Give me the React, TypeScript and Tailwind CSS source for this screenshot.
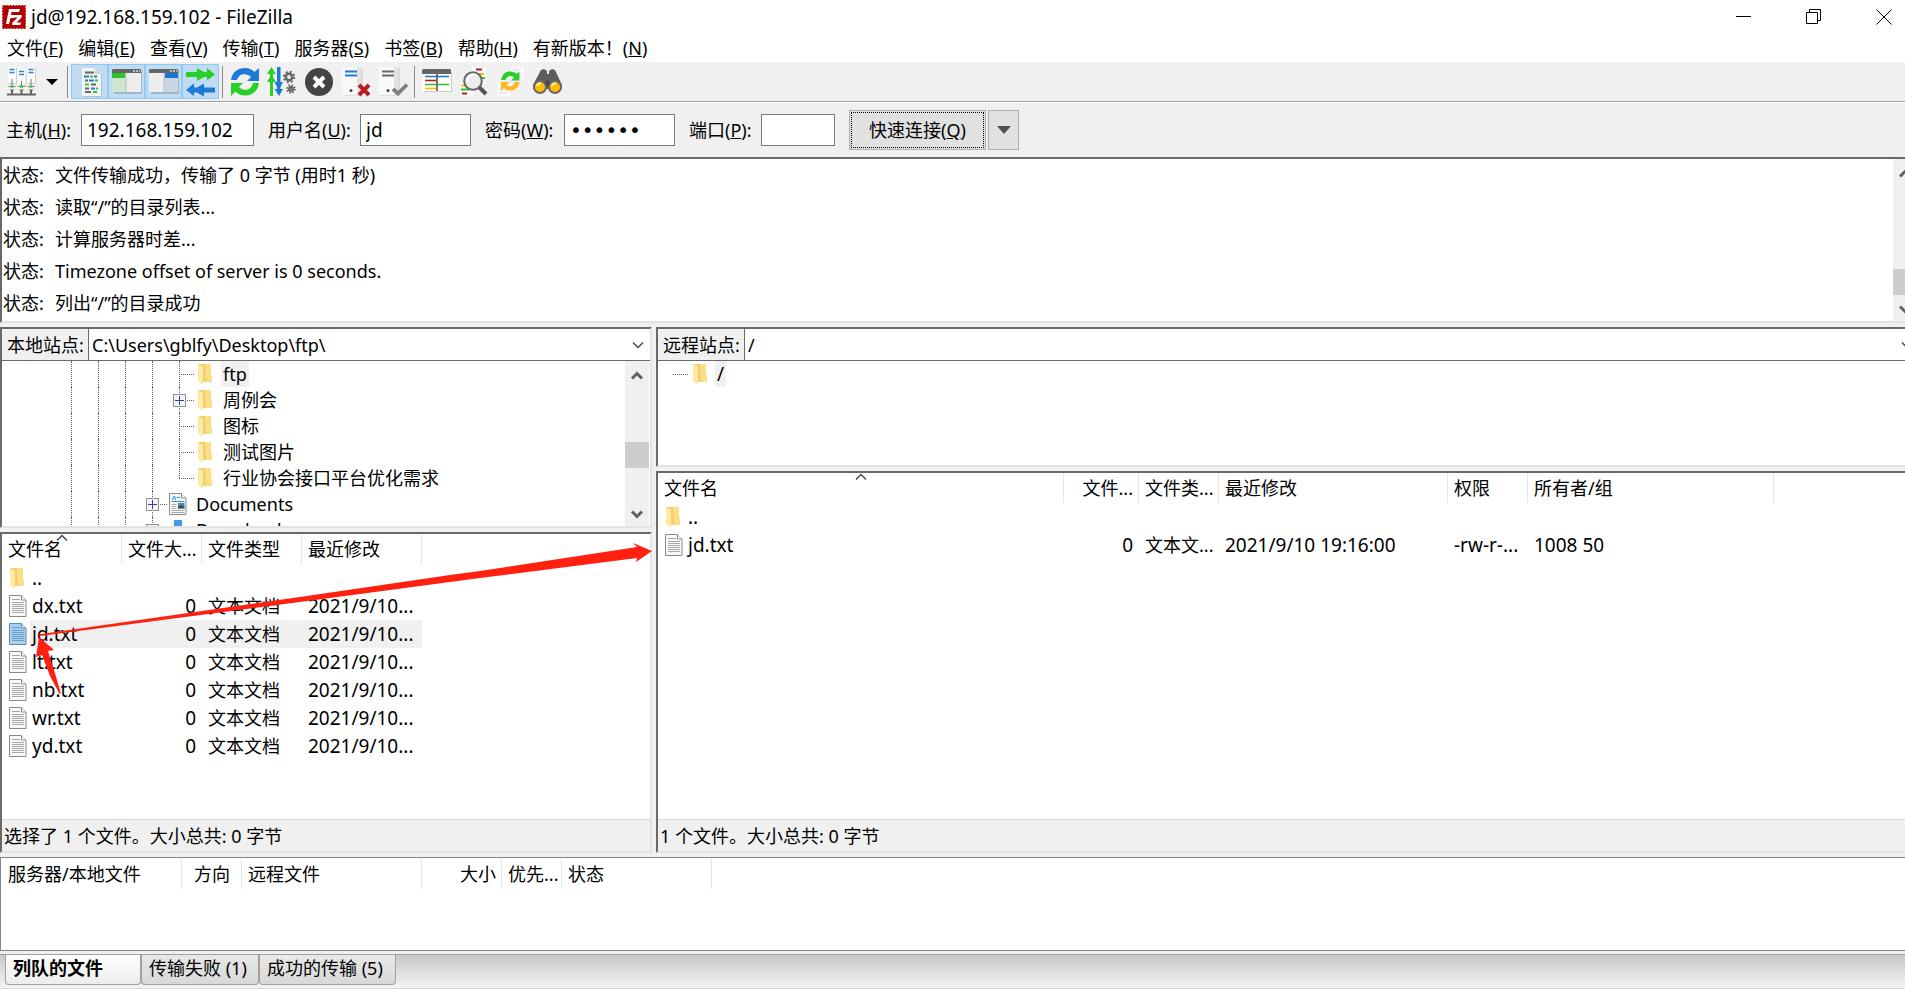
import type { ReactNode } from 'react'

interface Column {
  label: string
  width: string
  align?: 'left' | 'right' | 'center'
  sorted?: boolean
}

interface FileRow {
  name: string
  size?: string
  type?: string
  modified?: string
  perms?: string
  owner?: string
  folder?: boolean
  selected?: boolean
}

const menus = [
  ['文件', 'F'],
  ['编辑', 'E'],
  ['查看', 'V'],
  ['传输', 'T'],
  ['服务器', 'S'],
  ['书签', 'B'],
  ['帮助', 'H'],
  ['有新版本！', 'N'],
]

const logLines = [
  '文件传输成功，传输了 0 字节 (用时1 秒)',
  '读取“/”的目录列表...',
  '计算服务器时差...',
  'Timezone offset of server is 0 seconds.',
  '列出“/”的目录成功',
]

const localColumns: Column[] = [
  { label: '文件名', width: 'w-[120px]', sorted: true },
  { label: '文件大...', width: 'w-[80px]', align: 'right' },
  { label: '文件类型', width: 'w-[100px]' },
  { label: '最近修改', width: 'w-[120px]' },
]

const localFiles: FileRow[] = [
  { name: '..', folder: true },
  ...['dx.txt', 'jd.txt', 'lt.txt', 'nb.txt', 'wr.txt', 'yd.txt'].map((name) => ({
    name,
    size: '0',
    type: '文本文档',
    modified: '2021/9/10...',
    selected: name === 'jd.txt',
  })),
]

const remoteColumns: Column[] = [
  { label: '文件名', width: 'w-[406px]', sorted: true },
  { label: '文件...', width: 'w-[75px]', align: 'right' },
  { label: '文件类...', width: 'w-[80px]' },
  { label: '最近修改', width: 'w-[229px]' },
  { label: '权限', width: 'w-[80px]' },
  { label: '所有者/组', width: 'w-[246px]' },
]

const remoteFiles: FileRow[] = [
  { name: '..', folder: true },
  { name: 'jd.txt', size: '0', type: '文本文...', modified: '2021/9/10 19:16:00', perms: '-rw-r-...', owner: '1008 50' },
]

const queueColumns: Column[] = [
  { label: '服务器/本地文件', width: 'w-[180px]' },
  { label: '方向', width: 'w-[60px]', align: 'center' },
  { label: '远程文件', width: 'w-[180px]' },
  { label: '大小', width: 'w-[80px]', align: 'right' },
  { label: '优先...', width: 'w-[60px]' },
  { label: '状态', width: 'w-[150px]' },
]

const sunken = 'border-t-2 border-l-2 border-t-[#696969] border-l-[#696969] border-b-2 border-b-[#e3e3e3]'

/* ---------- icons ---------- */

function FolderIcon() {
  return (
    <svg width="16" height="22" viewBox="0 0 16 22" className="shrink-0">
      <path d="M1 1h13v11l1 1v6H5z" fill="#f3cf6b" />
      <path d="M8 1h6v11l1 1v6H9z" fill="#fbdf87" />
      <path d="M1 1l5 3v17l-1 .5L1 18z" fill="#ffe9a6" />
    </svg>
  )
}

function FileIcon({ selected }: { selected?: boolean }) {
  const edge = selected ? '#5b8cb5' : '#8a8a8a'
  return (
    <svg width="18" height="22" viewBox="0 0 18 22" className="shrink-0">
      <path d="M.5.5h12l4.500 4.500v16.500H.5z" fill={selected ? '#a9cff0' : '#f8f8f8'} stroke={edge} />
      <path d="M12.500.5v4.500H17" fill={selected ? '#cfe5f8' : '#fff'} stroke={edge} />
      <path d="M3 4.500h8M3 7.500h12M3 9.500h12M3 11.500h12M3 13.500h12M3 15.500h12M3 17.500h12" stroke={selected ? '#6c9bc4' : '#a8a8a8'} />
    </svg>
  )
}

function DocumentsIcon() {
  return (
    <svg width="18" height="22" viewBox="0 0 18 22" className="shrink-0">
      <path d="M.5.5h12l4.500 4.500v16.500H.5z" fill="#f8f8f8" stroke="#8a8a8a" />
      <path d="M12.500.5v4.500H17" fill="#fff" stroke="#8a8a8a" />
      <path d="M3 7l2.500-4L6.500 7M8 4.500h3M2.500 8.500h13" stroke="#2b8fd0" fill="none" />
      <path d="M2.500 11.500h5M2.500 13.500h5M2.500 15.500h5M2.500 17.500h13M2.500 19.500h13" stroke="#a8a8a8" />
      <path d="M9 10h6.500v5.500H9z" fill="#4d87ad" />
      <path d="M9 13l3-1 3.500 2v1.500H9z" fill="#2c5a52" />
    </svg>
  )
}

function DownloadsIcon() {
  return (
    <svg width="18" height="22" viewBox="0 0 18 22" className="shrink-0">
      <path d="M5 1h8v11h4l-8 9-8-9h4z" fill="#3f9ae5" />
    </svg>
  )
}

function Chevron({ up, thin }: { up?: boolean; thin?: boolean }) {
  return (
    <svg width="14" height="10" viewBox="0 0 14 10" className="shrink-0" fill="none" stroke={thin ? '#444' : '#606060'} strokeWidth={thin ? 1.3 : 3}>
      <path d={up ? 'M2 7.500L7 2.500l5 5' : 'M2 2.500l5 5 5-5'} />
    </svg>
  )
}

function SiteManagerIcon() {
  return (
    <svg width="30" height="30" viewBox="0 0 30 30">
      {[[1, 0], [10.500, 2], [20, 0]].map(([x, y]) => (
        <g key={x}>
          <path d={`M${x + 1} ${y + 1}h8v16h-8z`} fill="#cfcfcf" />
          <path d={`M${x} ${y}h8v16h-8z`} fill="#fafafa" />
          <path d={`M${x + 1.500} ${y + 2.500}h5M${x + 1.500} ${y + 5.500}h5`} stroke="#2f82cf" strokeWidth="1.500" />
          <path d={`M${x + 4} ${y + 12}v6`} stroke="#777" />
          <path d={`M${x} 19.500h8`} stroke="#999" />
          <path d={`M${x + 2.500} 19.500h3`} stroke="#2fcf2f" strokeWidth="2.500" />
        </g>
      ))}
      <path d="M0 27.500h29M5 27v-4M14.500 27v-4M24 27v-4" stroke="#666" strokeWidth="2" fill="none" />
      <path d="M3 23h4M12.500 23h4M22 23h4" stroke="#666" />
    </svg>
  )
}

function LogIcon() {
  return (
    <svg width="30" height="30" viewBox="0 0 30 30">
      <g transform="translate(2 1)">
        <path d="M6 1h13l6 6v22H6z" fill="#a9c3d8" />
        <path d="M5 0h13l6 6v22H5z" fill="#f3f3f3" />
        <path d="M18 0l6 6h-6z" fill="#d2d2d2" />
        <g strokeWidth="2">
          <path d="M8 4.500h9M8 12.500h3M14 16.500h5M8 20.500h4M8 24h6" stroke="#666" />
          <path d="M7 8.500h5M17 8.500h3M12 12.500h5M14 20.500h4" stroke="#2b78c8" />
          <path d="M13 8.500h3M18 12.500h3M8 16.500h4M19 20.500h2M16 24h4" stroke="#2ecc2e" />
        </g>
      </g>
    </svg>
  )
}

function TreeToggleIcon({ right }: { right?: boolean }) {
  return (
    <svg width="30" height="30" viewBox="0 0 30 30">
      <path d="M2 4h28v23H2z" fill="#9db8cd" />
      <path d="M0 5h29v20H0z" fill={right ? '#c9d6e3' : '#cfe5cf'} />
      {right ? <path d="M0 5h15v20H0z" fill="#eee" /> : <path d="M14 5h15v20H14z" fill="#eee" />}
      <path d="M1 2h27l1 1v3H0V3z" fill="#666" />
      <path d="M21 4h2M24 4h2M27 4h1" stroke="#ddd" strokeWidth="1.300" />
      {right ? <path d="M16 6h13v5H16z" fill="#1976d2" /> : <path d="M0 6h13v5H0z" fill="#28c428" />}
      {right ? <path d="M15 6v19" stroke="#b4c2d0" /> : <path d="M14 6v19" stroke="#b0c4b0" />}
    </svg>
  )
}

function QueueToggleIcon() {
  return (
    <svg width="30" height="30" viewBox="0 0 30 30">
      <path d="M0 5h11V1l7 4h3V1l8 6.500-8 6V10h-3l-7 4v-4H0z" fill="#27cf27" />
      <path d="M29 20.500H18v-4l-7 4H8v-4L0 23l8 6v-3.500h3l7 4v-4h11z" fill="#1b7bd6" />
    </svg>
  )
}

function RefreshIcon() {
  return (
    <svg width="30" height="30" viewBox="0 0 30 30">
      <path d="M1 13C2 5 8 1 15 1c4 0 7 1.500 9.500 4L29 1v13H17l4-4c-4-4-12-4-14 3z" fill="#1b7bd6" />
      <path d="M29 16c-1 8-7 12.500-14 12.500-4 0-7-1.500-9.500-4L1 29V16h12l-4 4c4 4.500 12 4 14-4z" fill="#27cf27" />
    </svg>
  )
}

function Gear({ cx, cy, r }: { cx: number; cy: number; r: number }) {
  return (
    <g stroke="#666" fill="none">
      <circle cx={cx} cy={cy} r={r} strokeWidth="2.500" />
      <circle cx={cx} cy={cy} r={r + 2} strokeWidth="2" strokeDasharray={`${(r + 2) * 0.393} ${(r + 2) * 0.393}`} />
    </g>
  )
}

function ProcessQueueIcon() {
  return (
    <svg width="30" height="30" viewBox="0 0 30 30">
      <path d="M3 29V15H0l3-5V7H0l4.500-7L9 7H6v3l3 5H6v14z" fill="#27cf27" />
      <path d="M10 0h3.500v15H16l-2.500 5v2H16l-4 7-4.500-7H10v-2l-2.500-5H10z" fill="#1b7bd6" />
      <Gear cx={22} cy={10} r={3.2} />
      <Gear cx={24} cy={22} r={1.8} />
    </svg>
  )
}

function CancelIcon() {
  return (
    <svg width="30" height="30" viewBox="0 0 30 30">
      <circle cx="15" cy="15" r="14" fill="#444" />
      <path d="M10 10l10 10M20 10L10 20" stroke="#fff" strokeWidth="4" />
    </svg>
  )
}

function ServerIcon({ ok }: { ok?: boolean }) {
  return (
    <svg width="30" height="30" viewBox="0 0 30 30">
      <path d="M2 1h20v28H2z" fill="#dcdcdc" />
      <path d="M1 0h15l3 2v26H1z" fill="#f9f9f9" />
      <path d="M16 0l4 2v26h-4z" fill="#e2e2e2" />
      <path d="M4 4.500h12M4 8.500h12" stroke={ok ? '#666' : '#1b7bd6'} strokeWidth="1.800" />
      <circle cx="10" cy="23.500" r="1.500" fill="#444" />
      {ok ? (
        <path d="M15 22l5 4.500 9-9" stroke="#808080" strokeWidth="3.800" fill="none" />
      ) : (
        <path d="M18 18l10 10M28 18L18 28" stroke="#b51f24" strokeWidth="4" />
      )}
    </svg>
  )
}

function FilterIcon() {
  return (
    <svg width="30" height="30" viewBox="0 0 30 30">
      <path d="M2 5h28v20H2z" fill="#ccc" />
      <path d="M0 5h29v19H0z" fill="#fff" />
      <path d="M1 2h27l1 1v4H0V3z" fill="#666" />
      <g strokeWidth="1.600">
        <path d="M3 9.500h24" stroke="#1b7bd6" />
        <path d="M3 13.500h11" stroke="#b51f24" />
        <path d="M3 17.500h11M16 17.500h11" stroke="#27c427" />
        <path d="M3 21.500h11" stroke="#ffb900" />
        <path d="M15 7v17" stroke="#555" />
      </g>
    </svg>
  )
}

function CompareIcon() {
  return (
    <svg width="30" height="30" viewBox="0 0 30 30">
      <path d="M13 0h14v16H13zM1 16h14v13H1z" fill="#fafafa" />
      <g strokeWidth="2">
        <path d="M17 2.500h6M3 26.500h5" stroke="#b51f24" />
        <path d="M19 7h6M2 18.500h5" stroke="#ffb900" />
        <path d="M21 11h5M2 22.500h8" stroke="#27c427" />
      </g>
      <path d="M20 20l7 7" stroke="#555" strokeWidth="4" />
      <circle cx="14" cy="14" r="8.800" fill="#ececec" stroke="#666" strokeWidth="2" />
      <path d="M8.500 15a6 6 0 0 1 9-6.500" stroke="#fff" strokeWidth="2" fill="none" />
    </svg>
  )
}

function SyncIcon() {
  return (
    <svg width="30" height="30" viewBox="0 0 30 30">
      <path d="M15 0h13v13H15zM1 16h13v13H1z" fill="#fafafa" />
      <path d="M17 3h8M17 6h8M3 23h8M3 26h8" stroke="#d8d8d8" />
      <path d="M5 13C6 7 10 4.500 14 4.500c3 0 5 1 6.500 2.500L23.500 5v8.500H15l3-3c-3-2.500-7-2-8.500 2.500z" fill="#27cf27" />
      <path d="M23.500 15c-1 6-5 8.500-9 8.500-3 0-5-1-6.500-2.500L5 23.500V15h8.500l-3 3c3 2.500 7 2 8.500-3z" fill="#ffb51b" />
    </svg>
  )
}

function FindIcon() {
  return (
    <svg width="30" height="30" viewBox="0 0 30 30">
      <path d="M8 3l3-1 3 2v3h2V4l3-2 3 1 7 15v4H0v-4z" fill="#5d5d5d" />
      <path d="M12.500 14h4v6h-4z" fill="#444" />
      <circle cx="7" cy="20" r="6" fill="#ffb900" stroke="#666" strokeWidth="1.800" />
      <circle cx="22" cy="20" r="6" fill="#ffb900" stroke="#666" strokeWidth="1.800" />
      <path d="M4 19a3.500 3.500 0 0 1 4-2.500M19 19a3.500 3.500 0 0 1 4-2.500" stroke="#fff0b0" strokeWidth="2" fill="none" />
    </svg>
  )
}

/* ---------- small parts ---------- */

function ToolButton({ label, active, children }: { label: string; active?: boolean; children: ReactNode }) {
  return (
    <button
      aria-label={label}
      className={`flex h-[35px] w-[37px] shrink-0 items-center justify-center ${active ? 'border border-[#90c8f6] bg-[#c0dcf3]' : ''}`}
    >
      {children}
    </button>
  )
}

function Separator() {
  return <span className="mx-[3px] h-8 w-px bg-[#8a8a8a]" />
}

function ScrollBar({ className, space }: { className?: string; space: string }) {
  return (
    <div className={`flex w-6 shrink-0 flex-col items-center bg-[#f0f0f0] ${className ?? ''}`}>
      <span className="flex h-[29px] items-center"><Chevron up /></span>
      <span className={space} />
      <span className="h-[26px] w-full bg-[#cdcdcd]" />
      <span className="flex-1" />
      <span className="flex h-6 items-center"><Chevron /></span>
    </div>
  )
}

function QuickField({ id, label, hotkey, labelWidth, inputWidth, value, type = 'text' }: {
  id: string
  label: string
  hotkey: string
  labelWidth: string
  inputWidth: string
  value: string
  type?: string
}) {
  return (
    <div className="flex items-center">
      <label htmlFor={id} className={`${labelWidth} whitespace-nowrap`}>
        {label}(<u>{hotkey}</u>):
      </label>
      <input
        id={id}
        type={type}
        defaultValue={value}
        className={`${inputWidth} h-8 border border-[#7a7a7a] bg-white px-[5px] outline-none ${type === 'password' ? "font-['DejaVu_Sans',sans-serif] text-[20px]" : 'text-[19px]'}`}
      />
    </div>
  )
}

function AddressBar({ id, label, path, className }: { id: string; label: string; path: string; className?: string }) {
  return (
    <div className={`flex h-8 shrink-0 border-b border-[#696969] ${className ?? ''}`}>
      <label htmlFor={id} className="flex w-[87px] shrink-0 items-center border-r border-[#696969] bg-[#f0f0f0] pl-[5px] whitespace-nowrap">
        {label}
      </label>
      <div className="relative flex-1">
        <select id={id} className="h-full w-full appearance-none bg-white pl-[3px] outline-none">
          <option>{path}</option>
        </select>
        <span className="pointer-events-none absolute top-0 right-[5px] flex h-full items-center"><Chevron thin /></span>
      </div>
    </div>
  )
}

function TreeRow({ depth, label, icon, expandable, last, selected }: {
  depth: number
  label: string
  icon: ReactNode
  expandable?: boolean
  last?: boolean
  selected?: boolean
}) {
  return (
    <li className="flex h-[26px] items-stretch pl-14">
      {Array.from({ length: depth }, (_, i) => (
        <span key={i} className="w-[27px] shrink-0 pl-[13px]">
          <span className="block h-full border-l border-dotted border-[#606060]" />
        </span>
      ))}
      <span className="relative w-[27px] shrink-0 pl-[13px]">
        <span className={`block border-l border-dotted border-[#606060] ${last ? 'h-[13px]' : 'h-full'}`} />
        <span className="absolute top-[13px] left-[13px] w-[15px] border-t border-dotted border-[#606060]" />
        {expandable && (
          <button aria-label={`展开 ${label}`} className="absolute top-[7px] left-[7px] flex h-[13px] w-[13px] items-center justify-center border border-[#919191] bg-[#f4f4f4]">
            <svg width="9" height="9" viewBox="0 0 9 9"><path d="M0 4.500h9M4.500 0v9" stroke="#33468c" /></svg>
          </button>
        )}
      </span>
      <span className="flex w-7 shrink-0 items-center justify-center pr-1">{icon}</span>
      <span className={`flex items-center px-0.5 whitespace-nowrap ${selected ? 'bg-[#f0f0f0]' : ''}`}>{label}</span>
    </li>
  )
}

function HeaderRow({ columns }: { columns: Column[] }) {
  return (
    <thead>
      <tr className="h-[30px]">
        {columns.map((col) => (
          <th
            key={col.label}
            className={`${col.width} relative overflow-hidden border-r border-[#e5e5e5] pr-[5px] pl-1.5 font-normal whitespace-nowrap ${
              col.align === 'right' ? 'text-right' : col.align === 'center' ? 'text-center' : 'text-left'
            }`}
          >
            {col.sorted && (
              <span className="absolute inset-x-0 -top-px flex justify-center"><Chevron up thin /></span>
            )}
            {col.label}
          </th>
        ))}
      </tr>
    </thead>
  )
}

function FileTable({ columns, files, width }: { columns: Column[]; files: FileRow[]; width: string }) {
  const extended = columns.length > 4
  return (
    <table className={`${width} table-fixed border-separate border-spacing-0 leading-6`}>
      <HeaderRow columns={columns} />
      <tbody>
        {files.map((file) => {
          const cell = `overflow-hidden px-1.5 py-0 whitespace-nowrap ${file.selected ? 'bg-[#f0f0f0]' : ''}`
          return (
            <tr key={file.name} className="h-7">
              <td className="p-0">
                <span className="flex h-7 items-center pl-[7px]">
                  <span className="flex w-[21px] shrink-0">{file.folder ? <FolderIcon /> : <FileIcon selected={file.selected} />}</span>
                  <span className={`flex h-7 flex-1 items-center pl-0.5 text-[19px] ${file.selected ? 'bg-[#f0f0f0]' : ''}`}>{file.name}</span>
                </span>
              </td>
              <td className={`${cell} text-right text-[19px]`}>{file.size}</td>
              <td className={cell}>{file.type}</td>
              <td className={`${cell} text-[19px]`}>{file.modified}</td>
              {extended && <td className={`${cell} text-[19px]`}>{file.perms}</td>}
              {extended && <td className={`${cell} text-[19px]`}>{file.owner}</td>}
            </tr>
          )
        })}
      </tbody>
    </table>
  )
}

function StatusLine({ children }: { children: ReactNode }) {
  return (
    <div className="flex h-8 shrink-0 items-center border-t border-[#d7d7d7] bg-[#f0f0f0] pl-0.5 whitespace-nowrap">{children}</div>
  )
}

/* ---------- window sections ---------- */

function TitleBar() {
  return (
    <header className="flex h-[34px] shrink-0 items-center bg-white pl-0.5">
      <svg width="24" height="24" viewBox="0 0 24 24">
        <path d="M0 0h24v24H0z" fill="#b30000" />
        <path d="M.5.5h23v23H.5z" fill="none" stroke="#fff" strokeDasharray="1 2" />
        <path d="M7 4h11l-1 3H9.500L9 10h4l-1 3H8.500L7 19H4z" fill="#fff" />
        <path d="M11 10h9l-.5 2.500-5 5H19l-.7 2.500H10l.5-2.500 5-5H11z" fill="#fff" />
      </svg>
      <h1 className="ml-[5px] flex-1 text-[19px]">jd@192.168.159.102 - FileZilla</h1>
      <div className="-mr-3.5 flex h-full">
        <button aria-label="最小化" className="flex w-[70px] items-center justify-center">
          <svg width="16" height="16" viewBox="0 0 16 16"><path d="M0 7.500h15" stroke="#000" /></svg>
        </button>
        <button aria-label="还原" className="flex w-[70px] items-center justify-center">
          <svg width="16" height="16" viewBox="0 0 16 16" fill="none" stroke="#000"><path d="M.5 3.500h11v11H.5zM3.500 3.500v-3h11v11h-3" /></svg>
        </button>
        <button aria-label="关闭" className="flex w-[70px] items-center justify-center">
          <svg width="16" height="16" viewBox="0 0 16 16" stroke="#000"><path d="M.5.5l15 15M15.500.5l-15 15" /></svg>
        </button>
      </div>
    </header>
  )
}

function Toolbar() {
  return (
    <div className="flex h-10 shrink-0 items-center border-b border-[#a0a0a0] pl-[3px]">
      <ToolButton label="站点管理器"><SiteManagerIcon /></ToolButton>
      <button aria-label="站点列表" className="flex h-[35px] w-6 items-center justify-center">
        <svg width="12" height="6" viewBox="0 0 12 6"><path d="M0 0h12L6 6z" /></svg>
      </button>
      <Separator />
      <ToolButton label="消息日志" active><LogIcon /></ToolButton>
      <ToolButton label="本地目录树" active><TreeToggleIcon /></ToolButton>
      <ToolButton label="远程目录树" active><TreeToggleIcon right /></ToolButton>
      <ToolButton label="传输队列" active><QueueToggleIcon /></ToolButton>
      <Separator />
      <ToolButton label="刷新"><RefreshIcon /></ToolButton>
      <ToolButton label="处理队列"><ProcessQueueIcon /></ToolButton>
      <ToolButton label="取消"><CancelIcon /></ToolButton>
      <ToolButton label="断开"><ServerIcon /></ToolButton>
      <ToolButton label="重新连接"><ServerIcon ok /></ToolButton>
      <Separator />
      <ToolButton label="过滤器"><FilterIcon /></ToolButton>
      <ToolButton label="目录对比"><CompareIcon /></ToolButton>
      <ToolButton label="同步浏览"><SyncIcon /></ToolButton>
      <ToolButton label="搜索"><FindIcon /></ToolButton>
    </div>
  )
}

function QuickConnect() {
  return (
    <form className="flex h-[55px] shrink-0 items-center gap-3.5 border-t border-white pl-1.5">
      <QuickField id="host" label="主机" hotkey="H" labelWidth="w-[75px]" inputWidth="w-[173px]" value="192.168.159.102" />
      <QuickField id="user" label="用户名" hotkey="U" labelWidth="w-[92px]" inputWidth="w-[111px]" value="jd" />
      <QuickField id="pass" label="密码" hotkey="W" labelWidth="w-[79px]" inputWidth="w-[111px]" value="secret" type="password" />
      <QuickField id="port" label="端口" hotkey="P" labelWidth="w-[72px]" inputWidth="w-[74px]" value="" />
      <div className="flex gap-0.5">
        <button type="button" className="h-10 w-[137px] border border-[#adadad] bg-[#e1e1e1] p-px">
          <span className="flex h-full items-center justify-center border border-dotted border-black">
            快速连接(<u>Q</u>)
          </span>
        </button>
        <button type="button" aria-label="历史记录" className="flex h-10 w-[31px] items-center justify-center border border-[#adadad] bg-[#e1e1e1]">
          <svg width="14" height="8" viewBox="0 0 14 8"><path d="M0 0h14L7 8z" fill="#505050" /></svg>
        </button>
      </div>
    </form>
  )
}

// Hand-drawn arrows: one marks the local jd.txt, the other leads to its remote copy.
function Arrows() {
  return (
    <svg width="660" height="400" viewBox="0 323 660 400" className="pointer-events-none absolute top-0 left-0" fill="#ff2010">
      <path d="M38 634.500L300 597 450 575 480 571 637 547 633 543 652 551 636 562 637 558 480 578 450 582 300 602 40 636z" />
      <path d="M39 637L54 650l-6 1 6 19 7 24-2-1-9-17-8-21-6 2z" />
    </svg>
  )
}

export default function App() {
  return (
    <div className="flex h-screen min-h-[800px] flex-col overflow-hidden bg-[#f0f0f0] font-['Noto_Sans','Noto_Sans_CJK_SC',sans-serif] text-[18px] leading-6 text-black">
      <TitleBar />
      <nav className="flex h-7 shrink-0 items-center gap-[15px] bg-white pl-[7px]">
        {menus.map(([label, key]) => (
          <button key={key} className="whitespace-nowrap">
            {label}(<u>{key}</u>)
          </button>
        ))}
      </nav>
      <Toolbar />
      <QuickConnect />

      <section className={`flex h-[166px] shrink-0 bg-white ${sunken}`}>
        <ul className="flex-1 overflow-hidden">
          {logLines.map((line) => (
            <li key={line} className="flex h-8 items-center pl-px">
              <span className="w-[52px] shrink-0">状态:</span>
              <span>{line}</span>
            </li>
          ))}
        </ul>
        <ScrollBar className="-mr-3" space="h-[81px]" />
      </section>

      <main className="relative grid min-h-0 flex-1 grid-cols-[652px_1fr] gap-x-1 py-1">
        <section className="flex min-h-0 min-w-0 flex-col gap-1">
          <div className={`flex shrink-0 flex-col border-r-2 border-r-[#e3e3e3] bg-white ${sunken}`}>
            <AddressBar id="local-path" label="本地站点:" path="C:\Users\gblfy\Desktop\ftp\" />
            <div className="flex h-[165px]">
              <ul className="flex-1 overflow-hidden">
                <TreeRow depth={4} label="ftp" icon={<FolderIcon />} selected />
                <TreeRow depth={4} label="周例会" icon={<FolderIcon />} expandable />
                <TreeRow depth={4} label="图标" icon={<FolderIcon />} />
                <TreeRow depth={4} label="测试图片" icon={<FolderIcon />} />
                <TreeRow depth={4} label="行业协会接口平台优化需求" icon={<FolderIcon />} last />
                <TreeRow depth={3} label="Documents" icon={<DocumentsIcon />} expandable />
                <TreeRow depth={3} label="Downloads" icon={<DownloadsIcon />} expandable />
              </ul>
              <ScrollBar className="mr-px" space="h-[52px]" />
            </div>
          </div>
          <div className={`flex min-h-0 flex-1 flex-col border-r-2 border-r-[#e3e3e3] bg-white ${sunken}`}>
            <div className="min-h-0 flex-1 overflow-hidden">
              <FileTable columns={localColumns} files={localFiles} width="w-[420px]" />
            </div>
            <StatusLine>选择了 1 个文件。大小总共: 0 字节</StatusLine>
          </div>
        </section>

        <section className="flex min-h-0 min-w-0 flex-col gap-1 overflow-hidden">
          <div className={`flex shrink-0 flex-col bg-white ${sunken}`}>
            <AddressBar id="remote-path" label="远程站点:" path="/" className="-mr-3.5" />
            <ul className="h-[104px] overflow-hidden">
              <li className="flex h-[26px] items-center pl-[15px]">
                <span className="w-[15px] border-t border-dotted border-[#606060]" />
                <span className="flex w-[27px] justify-center pr-1"><FolderIcon /></span>
                <span className="flex h-full items-center bg-[#f0f0f0] px-0.5 text-[19px]">/</span>
              </li>
            </ul>
          </div>
          <div className={`flex min-h-0 flex-1 flex-col bg-white ${sunken}`}>
            <div className="min-h-0 flex-1 overflow-hidden">
              <FileTable columns={remoteColumns} files={remoteFiles} width="w-[1116px]" />
            </div>
            <StatusLine>1 个文件。大小总共: 0 字节</StatusLine>
          </div>
        </section>
        <Arrows />
      </main>

      <section className="mb-[3px] h-[94px] shrink-0 overflow-hidden border-y border-l border-[#828790] bg-white pt-px pl-px">
        <table className="w-[710px] table-fixed border-separate border-spacing-0">
          <HeaderRow columns={queueColumns} />
        </table>
      </section>

      <footer className="flex h-[35px] shrink-0 items-start border-t border-b border-t-[#a0a0a0] border-b-[#d9d9d9] bg-gradient-to-b from-[#c8c8c8] to-[#f4f4f4] pl-[5px]">
        <button className="h-[30px] w-[136px] rounded-b-sm border-x border-b border-[#a0a0a0] bg-gradient-to-b from-white to-[#ececec] pb-1 pl-[7px] text-left font-bold">
          列队的文件
        </button>
        <button className="h-[30px] w-[118px] rounded-b-sm border-x border-b border-[#a0a0a0] bg-gradient-to-b from-[#e8e8e8] to-[#d8d8d8] pb-1 pl-[7px] text-left whitespace-nowrap">
          传输失败 (1)
        </button>
        <button className="h-[30px] w-[137px] rounded-b-sm border-x border-b border-[#a0a0a0] bg-gradient-to-b from-[#e8e8e8] to-[#d8d8d8] pb-1 pl-[7px] text-left whitespace-nowrap">
          成功的传输 (5)
        </button>
      </footer>
    </div>
  )
}
